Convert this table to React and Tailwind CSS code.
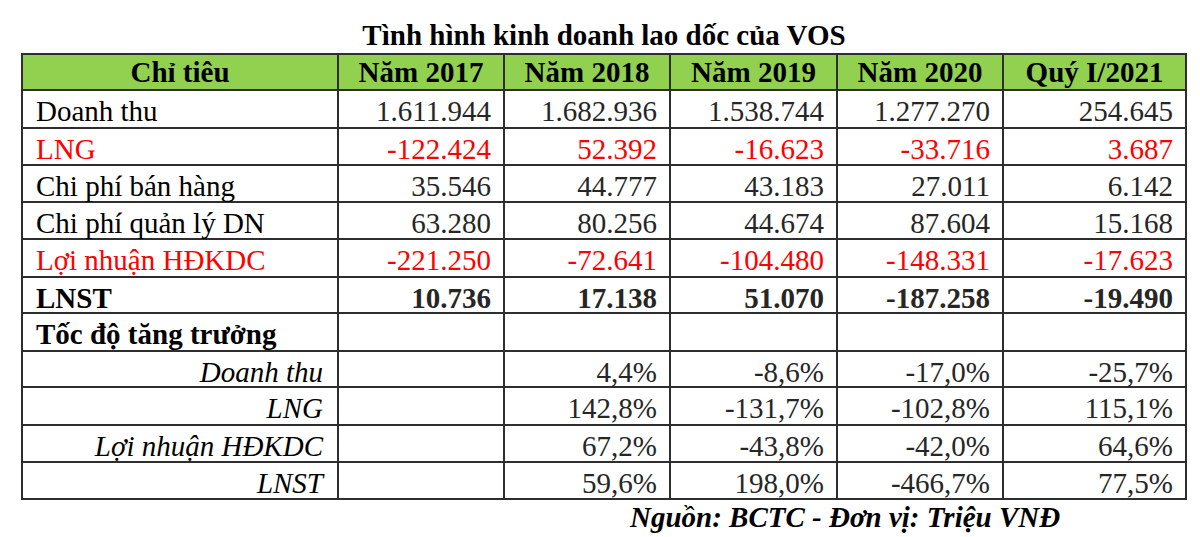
const rows = [
  { label: "Doanh thu", vals: ["1.611.944", "1.682.936", "1.538.744", "1.277.270", "254.645"], type: "normal" },
  { label: "LNG", vals: ["-122.424", "52.392", "-16.623", "-33.716", "3.687"], type: "red" },
  { label: "Chi phí bán hàng", vals: ["35.546", "44.777", "43.183", "27.011", "6.142"], type: "normal" },
  { label: "Chi phí quản lý DN", vals: ["63.280", "80.256", "44.674", "87.604", "15.168"], type: "normal" },
  { label: "Lợi nhuận HĐKDC", vals: ["-221.250", "-72.641", "-104.480", "-148.331", "-17.623"], type: "red" },
  { label: "LNST", vals: ["10.736", "17.138", "51.070", "-187.258", "-19.490"], type: "bold" },
  { label: "Tốc độ tăng trưởng", vals: ["", "", "", "", ""], type: "bold" },
  { label: "Doanh thu", vals: ["", "4,4%", "-8,6%", "-17,0%", "-25,7%"], type: "italic" },
  { label: "LNG", vals: ["", "142,8%", "-131,7%", "-102,8%", "115,1%"], type: "italic" },
  { label: "Lợi nhuận HĐKDC", vals: ["", "67,2%", "-43,8%", "-42,0%", "64,6%"], type: "italic" },
  { label: "LNST", vals: ["", "59,6%", "198,0%", "-466,7%", "77,5%"], type: "italic" },
];

const headers = ["Chỉ tiêu", "Năm 2017", "Năm 2018", "Năm 2019", "Năm 2020", "Quý I/2021"];

export default function App() {
  return (
    <div className="w-[1200px] h-[537px] bg-white overflow-hidden font-['Liberation_Serif','Times_New_Roman',serif]">
      <div className="h-[53px] pt-[19px] text-center">
        <div className="ml-[21px] w-[1166px] text-[29px] leading-[32px] font-bold text-black">
          Tình hình kinh doanh lao dốc của VOS
        </div>
      </div>
      <div className="ml-[21px] w-[1166px] border-l-2 border-t-2 border-[#2e2e2e] grid grid-cols-[316px_166px_166px_167px_166px_183px] grid-rows-[36px_38px_37px_37px_37px_38px_36px_38px_36px_38px_37px_37px]">
        {headers.map((h) => (
          <div
            key={h}
            className="bg-[#92d050] border-r-2 border-b-2 border-[#2e2e2e] text-center font-bold text-[29px] leading-[32px] pt-[1px] text-black whitespace-nowrap"
          >
            {h}
          </div>
        ))}
        {rows.map((r, ri) => {
          const labelCls =
            r.type === "red"
              ? "text-[#ff0000] text-left pl-[13px]"
              : r.type === "bold"
              ? "text-black font-bold text-left pl-[13px]"
              : r.type === "italic"
              ? "text-black italic text-right pr-[14px]"
              : "text-black text-left pl-[13px]";
          const valCls =
            r.type === "red"
              ? "text-[#ff0000]"
              : r.type === "bold"
              ? "text-[#262626] font-bold"
              : "text-[#262626]";
          return [
            <div
              key={`l${ri}`}
              className={`border-r-2 border-b-2 border-[#2e2e2e] text-[29px] leading-[32px] pt-[4px] whitespace-nowrap ${labelCls}`}
            >
              {r.label}
            </div>,
            ...r.vals.map((v, vi) => (
              <div
                key={`v${ri}-${vi}`}
                className={`border-r-2 border-b-2 border-[#2e2e2e] text-[29px] leading-[32px] pt-[4px] text-right pr-[12px] whitespace-nowrap ${valCls}`}
              >
                {v}
              </div>
            )),
          ];
        })}
      </div>
      <div className="mt-[1px] pl-[630px] text-[29px] leading-[32px] font-bold italic text-black whitespace-nowrap">
        Nguồn: BCTC - Đơn vị: Triệu VNĐ
      </div>
    </div>
  );
}
